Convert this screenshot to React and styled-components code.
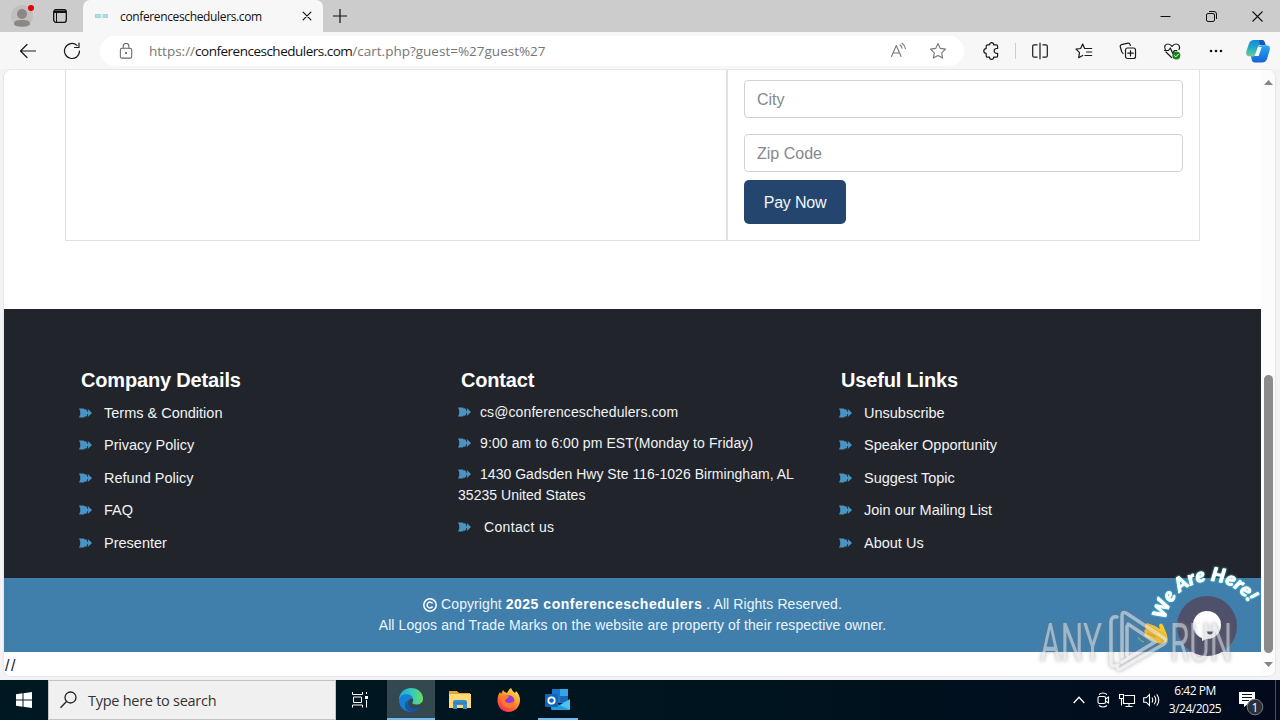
import React from "react";
import styled, { createGlobalStyle } from "styled-components";

const GlobalStyle = createGlobalStyle`
    * {
        box-sizing: border-box;
    }
    body {
        margin: 0;
        overflow: hidden;
        font-family: "Liberation Sans", Arial, sans-serif;
    }
    svg {
        display: block;
        flex: none;
    }
`;

const companyLinks = [
    "Terms & Condition",
    "Privacy Policy",
    "Refund Policy",
    "FAQ",
    "Presenter"
];

const usefulLinks = [
    "Unsubscribe",
    "Speaker Opportunity",
    "Suggest Topic",
    "Join our Mailing List",
    "About Us"
];

const Line = ({ size = 18, w = 1.2, children, ...rest }) => (
    <svg
        width={size}
        height={size}
        viewBox="0 0 18 18"
        fill="none"
        stroke="currentColor"
        strokeWidth={w}
        strokeLinecap="round"
        strokeLinejoin="round"
        {...rest}
    >
        {children}
    </svg>
);

const Bullet = () => (
    <svg width="13" height="10" viewBox="0 0 13 10" fill="#4a93c3">
        <path d="M0 .5h5l.8 1.200 1-.7L8.300 3v4L6.800 9l-1-.7L5 9.500H0l1.200-2.700V3.200z" />
        <path d="M8.700.8 13 5 8.700 9.200V6.500L7.500 5l1.200-1.500z" />
        <path d="M8.600 1v3M8.600 6v3" stroke="#21252b" strokeWidth=".5" />
    </svg>
);

const LinkList = ({ items }) => (
    <ul>
        {items.map(item => (
            <LinkRow key={item}>
                <Bullet />
                <span>{item}</span>
            </LinkRow>
        ))}
    </ul>
);

const TabStrip = () => (
    <TabStripStyled>
        <TabTools>
            <svg width="24" height="26" viewBox="0 0 24 26">
                <circle cx="11" cy="13" r="11" fill="#c1bfbe" />
                <circle cx="11" cy="11" r="5" fill="#8b8785" />
                <path d="M3 21.5c0-4 3-4.5 8-4.5s8 .5 8 4.5c-2 3-14 3-16 0z" fill="#8b8785" />
                <circle cx="20" cy="5" r="3" fill="#e3000b" />
            </svg>
            <svg width="14" height="14" viewBox="0 0 14 14">
                <rect x=".7" y=".7" width="12.6" height="12.6" rx="2.2" fill="none" stroke="#111" strokeWidth="1.3" />
                <path d="M1 1.5h12V4H1z" fill="#111" />
                <path d="M3.500 4v9" stroke="#111" />
            </svg>
        </TabTools>
        <Tab>
            <svg width="14" height="6" viewBox="0 0 14 6" fill="#a9d3dc">
                <path d="M0 1h6v4H0zM7.5 1H13v4H7.5z" />
                <path d="M1 3h11" stroke="#c4e2e8" />
            </svg>
            <TabTitle>conferenceschedulers.com</TabTitle>
            <Line size={14} w={1.5}>
                <path d="M4 4l10 10M14 4L4 14" />
            </Line>
        </Tab>
        <NewTab>
            <svg width="14" height="14" stroke="#111" strokeWidth="1.2">
                <path d="M7 0v14M0 7h14" />
            </svg>
        </NewTab>
        <WindowButtons>
            <svg width="11" height="11" stroke="#111">
                <path d="M.5 5.5h10" />
            </svg>
            <svg width="11" height="11" fill="none" stroke="#111">
                <rect x=".5" y="2.5" width="8" height="8" rx="1.5" />
                <path d="M3 .5h5a2.5 2.5 0 0 1 2.5 2.5v5" />
            </svg>
            <svg width="11" height="11" stroke="#111" strokeWidth="1.1">
                <path d="M.5.5l10 10M10.500.5l-10 10" />
            </svg>
        </WindowButtons>
    </TabStripStyled>
);

const Toolbar = () => (
    <ToolbarStyled>
        <ToolButton>
            <Line>
                <path d="M1.500 9h15M8 2.500L1.500 9 8 15.500" />
            </Line>
        </ToolButton>
        <ToolButton>
            <Line>
                <path d="M16.500 9A7.500 7.500 0 1 1 14 3.400M16 1v4.500h-4.500" />
            </Line>
        </ToolButton>
        <AddressBar>
            <LockIcon>
                <Line size={17} w={1.1}>
                    <rect x="2.500" y="5.500" width="12" height="10.500" rx="1.800" />
                    <path d="M5.500 5.500V3.500a3 3 0 0 1 6 0v2" />
                    <circle cx="8.500" cy="10.700" r=".6" fill="currentColor" />
                </Line>
            </LockIcon>
            <Url>
                https://<b>conferenceschedulers.com</b>/cart.php?guest=%27guest%27
            </Url>
            <ToolButton $width={40} $color="#777">
                <Line w={1.100}>
                    <path d="M2.500 14.500L7.300 3.500l4.800 11M4 11h6.600M11 3c1.300.8 1.800 1.800 2 3.300M13 1.200c2 1.300 3.200 3.200 3.500 5.600" />
                </Line>
            </ToolButton>
            <ToolButton $width={40} $color="#777">
                <Line w={1.100}>
                    <path d="M9 1.500l2.300 4.900 5.200.7-3.800 3.700.9 5.300L9 13.600l-4.600 2.500.9-5.300L1.500 7.100l5.200-.7z" />
                </Line>
            </ToolButton>
        </AddressBar>
        <ToolButton $width={40}>
            <Line>
                <path d="M5.500 2.800h2a2.100 2.100 0 0 1 4.200 0h2.600q1.300 0 1.300 1.300v2.400h-1a2.400 2.400 0 0 0 0 4.800h1v2.600q0 1.300-1.300 1.300h-2.600a2.100 2.100 0 0 1-4.200 0h-2q-1.300 0-1.300-1.300v-2.500a2.400 2.400 0 0 1 0-4.800V4.100q0-1.300 1.300-1.300z" />
            </Line>
        </ToolButton>
        <ToolDivider />
        <ToolButton>
            <Line strokeLinecap="butt">
                <path d="M6.500 2.800H3.200q-1.500 0-1.500 1.500v9.400q0 1.500 1.500 1.500h3.300M11.500 2.800h3.300q1.500 0 1.500 1.500v9.400q0 1.500-1.500 1.500h-3.300M9 .8v16.400" />
            </Line>
        </ToolButton>
        <ToolButton>
            <Line>
                <path d="M9.500 6.300L7.700 2 5.600 6.500 1 7.200l3.500 3.500-.8 5 4-2.300M10.200 6.500h6.500M11.500 10h5.200M10 13.500h6.700" />
            </Line>
        </ToolButton>
        <ToolButton>
            <Line>
                <rect x="6.500" y="6" width="10" height="10.500" rx="2" />
                <path d="M4 11.500L2.800 10 1.200 4.500Q1 3 2.500 2.600L9 1.200q1.700-.2 2 1.300l.3 1M11.500 8.500v5.500M8.800 11.200h5.500" />
            </Line>
        </ToolButton>
        <ToolButton>
            <Line>
                <path d="M2.300 7.500C.5 4.500 2.500 2 5 2c2 0 3 1 4 2.300C10 3 11 2 13 2c2.800 0 4.500 2.700 3 5.500M3 10l5.500 5.500M1.500 8.500h4L7.300 6l2.500 5.500 1.500-3h2.500" />
                <circle cx="13.300" cy="13.500" r="4" fill="#16831d" stroke="none" />
                <path d="M11.600 13.700l1.200 1.200 2.500-2.600" stroke="#fff" strokeWidth="1" />
            </Line>
        </ToolButton>
        <ToolButton>
            <svg width="14" height="4" fill="#111">
                <circle cx="2" cy="2" r="1.300" />
                <circle cx="7" cy="2" r="1.300" />
                <circle cx="12" cy="2" r="1.300" />
            </svg>
        </ToolButton>
        <ToolButton $width={40}>
            <svg width="24" height="23" viewBox="0 0 24 23">
                <defs>
                    <linearGradient id="copilotLeft" x1="0" y1="0" x2="0" y2="1">
                        <stop offset="0" stopColor="#1687dc" />
                        <stop offset=".5" stopColor="#21acc8" />
                        <stop offset="1" stopColor="#6bd08c" />
                    </linearGradient>
                    <linearGradient id="copilotRight" x1="0" y1="0" x2="0" y2="1">
                        <stop offset="0" stopColor="#2aa8f5" />
                        <stop offset="1" stopColor="#1463d8" />
                    </linearGradient>
                </defs>
                <path d="M8 0h8q2 0 2.600 2l1 3h-5q-2 0-2.700 2.200L9.500 14q-.7 2.300-3 2.300H4Q-1 16.300.5 11L3 3.500Q4.300 0 8 0z" fill="url(#copilotLeft)" />
                <path d="M13 0h3q2 0 2.600 2l1 3H14z" fill="#1658bd" />
                <path d="M16 22.500H8.500q-2 0-2.600-2L5 16.300h2.500q2 0 2.700-2.200L12.800 7q.7-1.800 3-1.800H20q5 0 3.500 5.500L21 19q-1.300 3.500-5 3.500z" fill="url(#copilotRight)" />
                <path d="M12 7h3.800l-3.200 9H8.800z" fill="#fff" />
            </svg>
        </ToolButton>
    </ToolbarStyled>
);

const Footer = () => (
    <>
        <FooterStyled>
            <FooterColumn>
                <h4>Company Details</h4>
                <LinkList items={companyLinks} />
            </FooterColumn>
            <FooterColumn>
                <h4>Contact</h4>
                <ContactRow>
                    <Bullet />
                    <ContactText>cs@conferenceschedulers.com</ContactText>
                </ContactRow>
                <ContactRow>
                    <Bullet />
                    <ContactText>9:00 am to 6:00 pm EST(Monday to Friday)</ContactText>
                </ContactRow>
                <ContactRow $spacing="0.03px">
                    <Bullet />
                    <ContactText>
                        1430 Gadsden Hwy Ste 116-1026 Birmingham, AL
                        <br />
                    </ContactText>
                    35235 United States
                </ContactRow>
                <ContactRow $spacing="0.35px">
                    <Bullet />
                    <ContactText $indent={13}>Contact us</ContactText>
                </ContactRow>
            </FooterColumn>
            <FooterColumn>
                <h4>Useful Links</h4>
                <LinkList items={usefulLinks} />
            </FooterColumn>
        </FooterStyled>
        <Copyright>
            <CopyrightLine>
                <svg width="14" height="14" viewBox="0 0 14 14" fill="none" stroke="#fff" strokeWidth="1.500">
                    <circle cx="7" cy="7" r="6.200" />
                    <path d="M9.500 5.500A2.900 2.900 0 1 0 9.500 8.500" />
                </svg>
                <span>
                    Copyright <b>2025 conferenceschedulers</b> . All Rights Reserved.
                </span>
            </CopyrightLine>
            <OwnerLine>
                All Logos and Trade Marks on the website are property of their respective owner.
            </OwnerLine>
        </Copyright>
    </>
);

const ChatWidget = () => (
    <ChatStyled width="120" height="100" viewBox="1142 560 120 100">
        <defs>
            <path id="chatArc" d="M1165 627a45 46 0 0 1 90 0" />
        </defs>
        <circle cx="1207" cy="626" r="30" fill="#4f5069" />
        <circle cx="1207" cy="625" r="14" fill="#fff" />
        <path d="M1202 636v5l9-4z" fill="#fff" />
        <path d="M1206 631.500h8q-1.500 3-4 3-2.500 0-4-3z" fill="#4f5069" />
        <ArcText textLength="110">
            <textPath href="#chatArc" startOffset="7">
                We Are Here!
            </textPath>
        </ArcText>
        <path d="M1147 623l8 3 5 3-1-4q2-3 4 0l4 10q2 6-3 8-4 2-9-1l-9-5q-3-2-1-4-2-3 1-4-2-4 1-6z" fill="#ffca28" />
        <path d="M1147 628l10 5M1147 633l9 4M1149 638l7 3" stroke="#e59a13" fill="none" />
        <path d="M1138 637q2 4 6 5" stroke="#b7b34c" fill="none" />
    </ChatStyled>
);

const Watermark = () => (
    <WatermarkStyled width="204" height="76" viewBox="1034 602 204 76">
        <text x="1040" y="661" textLength="62" lengthAdjust="spacingAndGlyphs">
            ANY
        </text>
        <text x="1170" y="661" textLength="62" lengthAdjust="spacingAndGlyphs">
            RUN
        </text>
        <g fill="none" stroke="#e2e5ea" strokeWidth="3.500" strokeLinejoin="round" strokeLinecap="round">
            <path d="M1117 617q-5-1-6 4v42q1 5 7 2" />
            <path d="M1122 657v-41q0-5 4-3l38 25q4 3 0 6l-42 24q-4 3-5-1" />
            <path d="M1128 624l27 18-33 20M1127 626v29" />
        </g>
    </WatermarkStyled>
);

const Taskbar = () => (
    <TaskbarStyled>
        <TaskCell $width={48}>
            <svg width="16" height="16" viewBox="0 0 16 16" fill="#fff">
                <path d="M0 2.200L6.500 1.300v6.200H0zM7.500 1.200L16 0v7.500H7.500zM0 8.500h6.500v6.200L0 13.800zM7.500 8.500H16V16l-8.500-1.200z" />
            </svg>
        </TaskCell>
        <SearchBox>
            <svg width="18" height="18" fill="none" stroke="#222" strokeWidth="1.300">
                <circle cx="10.500" cy="6.500" r="5.500" />
                <path d="M6.500 10.500L.5 16.800" />
            </svg>
            <span>Type here to search</span>
        </SearchBox>
        <TaskCell $width={49}>
            <svg width="17" height="17" fill="none" stroke="#fff">
                <path d="M.5 0v2.500h10V0M.5 15.500V13h10v2.500M1.500 5h8v5.500h-8zM14.500 0v2M14.500 8v7.500" />
                <path d="M13 4h3v3h-3z" fill="#fff" stroke="none" />
            </svg>
        </TaskCell>
        <EdgeCell $width={48} $active $bar={48}>
            <svg width="24" height="24" viewBox="0 0 24 24">
                <defs>
                    <linearGradient id="edgeTop">
                        <stop offset="0" stopColor="#20a5df" />
                        <stop offset=".55" stopColor="#35cbb7" />
                        <stop offset="1" stopColor="#6bdc62" />
                    </linearGradient>
                </defs>
                <path d="M0 12C0 5 5 0 12 0s12 5 12 10.500c0 4-3 6-6.500 6-3 0-4.500-1-4-2.300 1.500-2 .8-5-2.500-5.700C6 7.500 1 9 0 12z" fill="url(#edgeTop)" />
                <path d="M0 12c1-4 4-5.800 7.500-5.800 3.500 0 6.500 2 6.500 5.300-2.500-2-5.500.5-5 4.500.5 3.500 4 6.500 9 5.500C11 26.500 0 22.500 0 12z" fill="#1580d6" />
                <path d="M9.300 12c-2.300 4 .5 8.500 5.700 8.500 3 0 5-.8 6.700-2.500-1.500 3.500-5.500 6-9.700 6C5 23 4 15 9.300 12z" fill="#1256a5" />
            </svg>
        </EdgeCell>
        <TaskCell $width={49}>
            <svg width="22" height="20" viewBox="0 0 22 20">
                <path d="M0 1h8l2 2h11v4H0z" fill="#e8a33b" />
                <path d="M0 4h22v14H0z" fill="#ffd975" />
                <path d="M4 19v-7q0-2 2-2h10q2 0 2 2v7h-4v-4H8v4z" fill="#3c8dcc" />
                <path d="M4 13h14" stroke="#2878b4" />
            </svg>
        </TaskCell>
        <TaskCell $width={49}>
            <svg width="24" height="24" viewBox="0 0 24 24">
                <defs>
                    <linearGradient id="foxBody" x1=".8" y1="0" x2=".2" y2="1">
                        <stop offset="0" stopColor="#fff04a" />
                        <stop offset=".45" stopColor="#ff9128" />
                        <stop offset="1" stopColor="#f5254f" />
                    </linearGradient>
                </defs>
                <path d="M3 4l1 2 2-4q1 2 4 3 2-4 4-5 1 3 4 5l1-2q4 4 4 9c0 7-5 12-11.500 12S.5 19 .5 12.500Q.5 7 3 4z" fill="url(#foxBody)" />
                <circle cx="12" cy="12.500" r="5.300" fill="#8b3be0" />
                <path d="M5 8q4-2 7 0l-1 2-3 2q0 3 4 3 3 0 5-2 0 7-6 7-6-1-6-7z" fill="#ff7830" />
            </svg>
        </TaskCell>
        <TaskCell $width={49} $bar={40}>
            <svg width="25" height="22" viewBox="0 0 25 22">
                <path d="M7 0h16v14H7z" fill="#1a78cc" />
                <path d="M15 0h8v7h-8z" fill="#35a4e8" />
                <path d="M15 7h8v6h-8z" fill="#1c65b4" />
                <path d="M6 21l19-11v10q0 1-1 1z" fill="#4cc2ef" />
                <path d="M6 12l19 9H8q-2 0-2-2z" fill="#249ce0" />
                <rect y="5" width="13" height="13" rx="1" fill="#0f67b9" />
                <circle cx="6.500" cy="11.500" r="3.200" fill="none" stroke="#fff" strokeWidth="1.800" />
            </svg>
        </TaskCell>
        <Tray>
            <TaskCell $width={24}>
                <svg width="12" height="8" fill="none" stroke="#fff" strokeWidth="1.300">
                    <path d="M.7 7L6 1.300 11.300 7" />
                </svg>
            </TaskCell>
            <TaskCell $width={24}>
                <svg width="13" height="16" fill="none" stroke="#fff" strokeWidth="1.100">
                    <rect x="1" y="4.500" width="7.500" height="7" rx="1.500" />
                    <path d="M8.500 7l3-2v6l-3-2M2 2.500q4-3 8 0M2 13.500q4 3 8 0" />
                </svg>
            </TaskCell>
            <TaskCell $width={24}>
                <svg width="17" height="15" fill="none" stroke="#fff" strokeWidth="1.100">
                    <path d="M5.500 2.500h10v8h-11V6M10 10.500v3M6.500 13.500h7M.5 1.500h4v4h-4zM2.500 5.500v7" />
                </svg>
            </TaskCell>
            <TaskCell $width={24}>
                <svg width="17" height="14" fill="none" stroke="#fff" strokeWidth="1.100">
                    <path d="M.7 4.800h2.500L6.500 1.500v11L3.200 9.200H.7zM9 4.500q1.500 2.500 0 5M11.300 2.800q3 4.200 0 8.400M13.700 1.200q4.200 5.800 0 11.600" />
                </svg>
            </TaskCell>
            <Clock>
                <span>6:42 PM</span>
                <span>3/24/2025</span>
            </Clock>
            <Notifications>
                <svg width="27" height="32" viewBox="0 0 27 32">
                    <path d="M0 8h16v12H9l-4 3v-3H0z" fill="#fff" />
                    <path d="M3 10.500h10M3 13.500h10M3 16.500h7" stroke="#0a1220" />
                    <circle cx="16" cy="23" r="7.800" fill="#2b2f36" stroke="#777b80" />
                    <text x="16" y="27.500" textAnchor="middle" fontSize="12" fill="#fff">
                        1
                    </text>
                </svg>
            </Notifications>
        </Tray>
    </TaskbarStyled>
);

export default function App() {
    return (
        <Screen>
            <GlobalStyle />
            <TabStrip />
            <Toolbar />
            <Viewport>
                <Page>
                    <CartTable>
                        <CartItems />
                        <PaymentForm>
                            <Field placeholder="City" />
                            <Field placeholder="Zip Code" />
                            <PayButton>Pay Now</PayButton>
                        </PaymentForm>
                    </CartTable>
                    <Footer />
                    <Trailing>//</Trailing>
                </Page>
                <Scrollbar>
                    <svg width="9" height="5" fill="#858585">
                        <path d="M0 5L4.500 0 9 5z" />
                    </svg>
                    <ScrollThumb />
                    <svg width="9" height="5" fill="#858585">
                        <path d="M0 0h9L4.500 5z" />
                    </svg>
                </Scrollbar>
            </Viewport>
            <Taskbar />
            <ChatWidget />
            <Watermark />
        </Screen>
    );
}

const Screen = styled.div`
    position: relative;
    width: 1280px;
    height: 720px;
    display: flex;
    flex-direction: column;
    overflow: hidden;
    background: #f3f3f5;
`;

const TabStripStyled = styled.div`
    height: 32px;
    flex: none;
    display: flex;
    background: #ccc;
    color: #111;
`;

const TabTools = styled.div`
    width: 83px;
    display: flex;
    align-items: center;
    gap: 18px;
    padding: 0 0 0 11px;
`;

const Tab = styled.div`
    width: 240px;
    display: flex;
    align-items: center;
    padding: 0 9px 0 12px;
    background: #f7f7f7;
    border-radius: 7px 7px 0 0;
`;

const TabTitle = styled.span`
    flex: 1;
    margin-left: 11px;
    font: 12px "Open Sans", sans-serif;
    letter-spacing: -0.36px;
    white-space: nowrap;
`;

const NewTab = styled.div`
    display: flex;
    align-items: center;
    padding-left: 10px;
`;

const WindowButtons = styled.div`
    margin-left: auto;
    display: flex;
    align-items: center;
    gap: 35px;
    padding-right: 17px;
`;

const ToolbarStyled = styled.div`
    height: 37px;
    flex: none;
    display: flex;
    align-items: center;
    padding: 1px 0 0 6px;
    background: #f7f7f7;
`;

const ToolButton = styled.div`
    width: ${props => props.$width || 44}px;
    flex: none;
    display: flex;
    justify-content: center;
    color: ${props => props.$color || "#1a1a1a"};
`;

const AddressBar = styled.div`
    width: 864px;
    height: 30px;
    flex: none;
    display: flex;
    align-items: center;
    margin: 0 7px 0 6px;
    padding: 0 6px 0 18px;
    background: #fff;
    border-radius: 15px;
`;

const LockIcon = styled.div`
    width: 31px;
    color: #666;
`;

const Url = styled.div`
    flex: 1;
    font: 13.5px "Open Sans", sans-serif;
    color: #767676;
    white-space: nowrap;

    b {
        font-weight: 400;
        letter-spacing: -0.5px;
        color: #111;
    }
`;

const ToolDivider = styled.div`
    width: 1px;
    height: 16px;
    margin: 0 2px 0 4px;
    background: #ccc;
`;

const Viewport = styled.div`
    width: 1273px;
    height: 608px;
    flex: none;
    display: flex;
    margin: 0 0 3px 3px;
    background: #fff;
    border: 1px solid #e6e6e8;
    border-radius: 8px;
    overflow: hidden;
`;

const Page = styled.div`
    width: 1257px;
    flex: none;
    display: flex;
    flex-direction: column;
`;

const CartTable = styled.div`
    width: 1135px;
    height: 171px;
    flex: none;
    display: flex;
    margin: 0 0 68px 61px;
    border: 1px solid #dee2e6;
    border-top: 0;
`;

const CartItems = styled.div`
    width: 662px;
    border-right: 2px solid #dee2e6;
`;

const PaymentForm = styled.div`
    flex: 1;
    padding: 10px 16px 0;
`;

const Field = styled.input`
    display: block;
    width: 100%;
    height: 38px;
    margin-bottom: 16px;
    padding: 8px 12px 6px;
    border: 1px solid #d0d2d4;
    border-radius: 4px;
    font: 16px "Liberation Sans", Arial, sans-serif;

    &::placeholder {
        color: #85888c;
        opacity: 1;
    }
`;

const PayButton = styled.button`
    display: block;
    width: 102px;
    height: 44px;
    margin-top: -8px;
    padding: 2px 0 0;
    border: 0;
    border-radius: 5px;
    background: #24466e;
    color: #f2f6fa;
    font: 16px "Liberation Sans", Arial, sans-serif;
    letter-spacing: -0.2px;
`;

const FooterStyled = styled.div`
    height: 269px;
    flex: none;
    display: grid;
    grid-template-columns: repeat(3, 380px);
    padding: 59px 0 0 74px;
    background: #21252b;
    color: #f1f3f5;
`;

const FooterColumn = styled.div`
    h4 {
        margin: 0 0 4.6px 3px;
        font-size: 20px;
        line-height: 24px;
        letter-spacing: -0.17px;
        color: #fff;
    }

    ul {
        margin: 0;
        padding: 0;
    }
`;

const LinkRow = styled.li`
    height: 32.5px;
    display: flex;
    align-items: center;
    gap: 12px;
    padding-left: 1px;
    font-size: 14.5px;
`;

const ContactRow = styled.div`
    margin: 0 0 10px;
    font-size: 14px;
    line-height: 21px;
    letter-spacing: ${props => props.$spacing || "0.1px"};
    white-space: nowrap;

    svg {
        display: inline-block;
    }

    h4 + & {
        margin-top: 10.4px;
    }

    &:last-child {
        margin-top: 11px;
    }
`;

const ContactText = styled.span`
    margin-left: ${props => props.$indent || 9}px;
`;

const Copyright = styled.div`
    height: 74px;
    flex: none;
    padding-top: 16px;
    background: #407eab;
    color: #eaf6fc;
    font-size: 14px;
    line-height: 21px;
    text-align: center;
`;

const CopyrightLine = styled.div`
    display: flex;
    justify-content: center;
    align-items: center;
    gap: 4px;
    letter-spacing: 0.08px;

    b {
        letter-spacing: 0.52px;
        color: #fff;
    }
`;

const OwnerLine = styled.div`
    letter-spacing: 0.1px;
`;

const Trailing = styled.div`
    padding-left: 1px;
    font-size: 16px;
    line-height: 27px;
    letter-spacing: 1.5px;
    color: #212529;
`;

const Scrollbar = styled.div`
    width: 15px;
    display: flex;
    flex-direction: column;
    align-items: center;
    padding: 10px 0 9px;
    background: #fcfcfc;
`;

const ScrollThumb = styled.div`
    width: 9px;
    height: 278px;
    margin: auto 0 9px;
    border-radius: 5px;
    background: #8b8b8b;
`;

const ChatStyled = styled.svg`
    position: absolute;
    left: 1142px;
    top: 560px;
    overflow: visible;
`;

const ArcText = styled.text`
    font: italic 900 19px Lato, sans-serif;
    fill: #fff;
    stroke: #fff;
    stroke-width: 0.9px;
    filter: drop-shadow(0 0 1px #3fd6e0);
`;

const WatermarkStyled = styled.svg`
    position: absolute;
    left: 1034px;
    top: 602px;
    opacity: 0.6;
    overflow: visible;
    filter: drop-shadow(0 0 2px #777);

    text {
        font: 400 54px Roboto, sans-serif;
        fill: #dcdfe5;
    }
`;

const TaskbarStyled = styled.div`
    height: 40px;
    flex: none;
    display: flex;
    background: linear-gradient(90deg, #001821, #00141f 60%, #020a1c);
`;

const TaskCell = styled.div`
    width: ${props => props.$width}px;
    height: 40px;
    display: flex;
    align-items: center;
    justify-content: center;
    background: linear-gradient(#76b9ed, #76b9ed) center bottom /
        ${props => props.$bar || 0}px 2px no-repeat
        ${props => (props.$active ? "#34484f" : "transparent")};
`;

const EdgeCell = styled(TaskCell)`
    margin-left: 2px;
`;

const SearchBox = styled.div`
    width: 288px;
    display: flex;
    align-items: center;
    gap: 10px;
    padding-left: 11px;
    background: #f0f0f0;
    border: 1px solid #c2c4c5;
    color: #333;
    font: 14.5px "Open Sans", sans-serif;
    letter-spacing: -0.27px;
`;

const Tray = styled.div`
    margin-left: auto;
    display: flex;
    padding-right: 4px;
`;

const Clock = styled.div`
    width: 64px;
    display: flex;
    flex-direction: column;
    align-items: center;
    padding-top: 2px;
    font: 12px/18px "Open Sans", sans-serif;
    letter-spacing: -0.5px;
    color: #fff;
`;

const Notifications = styled.div`
    width: 49px;
    display: flex;
    align-items: center;
    padding-left: 12px;
    border-right: 1px solid #4b515c;
    font-family: "Open Sans", sans-serif;
`;
